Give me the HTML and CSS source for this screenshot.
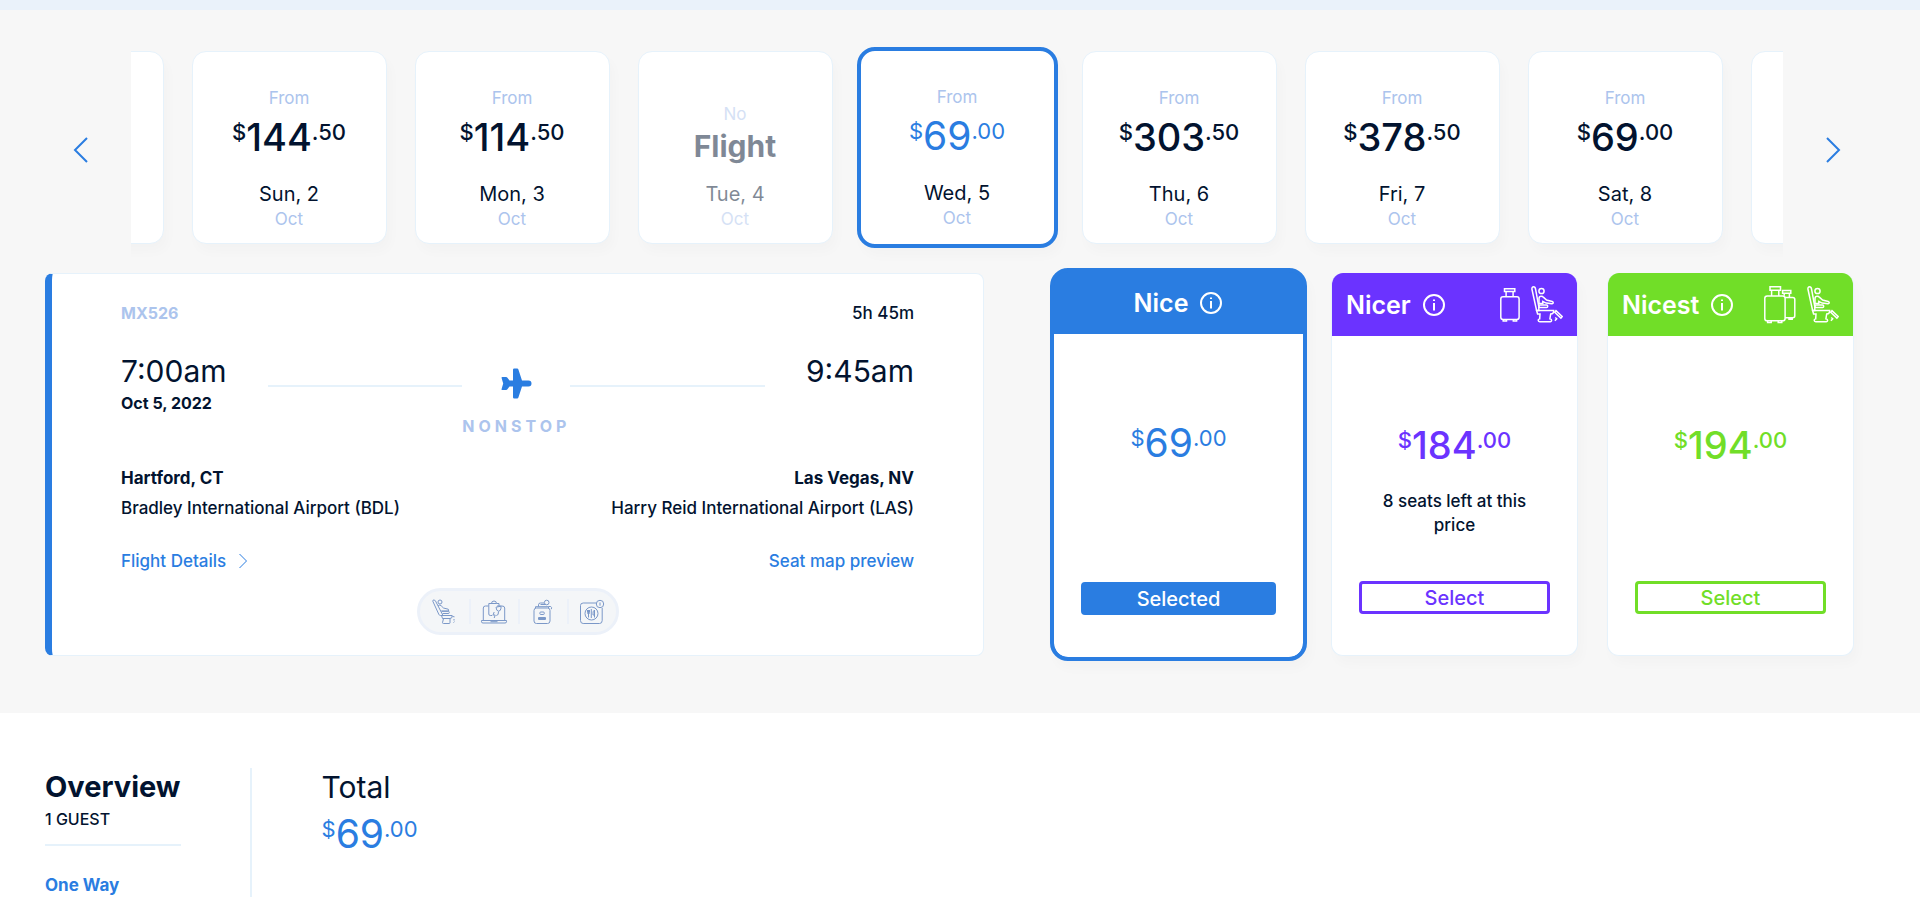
FILE: index.html
```html
<!DOCTYPE html>
<html lang="en">
<head>
<meta charset="utf-8">
<meta name="viewport" content="width=device-width, initial-scale=1">
<title>Select your flight</title>
<link rel="stylesheet" href="styles.css">
</head>
<body>
<svg class="sprite" aria-hidden="true">
  <symbol id="seat" viewBox="0 0 32 37">
    <path d="M1 3.500C.6 1.600 1.600.8 2.600.8S4.300 1.600 4.500 3l3.300 17.500v4H5.600z"/>
    <circle cx="10.500" cy="5" r="2.600"/>
    <path d="M8 17.300v-4.800c0-1.400 1-2.200 2.300-2.200 1 0 1.700.4 2.300 1.100l3 2.600 5.600 1.500c1.700.6 1.200 2.400-.4 2.200l-5.600-.6-3.400-1.600v2.100z"/>
    <path d="M8 18.900h7.600c1.500 0 1.500 2.600 0 2.600H8z"/>
    <path d="M5.600 24.500h17.100c.2 2-.8 3.300-3 3.500l-.8 4.800c2.200.2 2.200 2.900.3 2.900H8.700c-2 0-2-2.600 0-2.900l.3-4.700H6.600z"/>
    <path d="M23.700 26.200l1.300-1.500 6.200 5.800-1.300 1.600z"/>
    <path d="M24.200 31.500l1.500 1.300-1.800 1.900"/>
  </symbol>
  <symbol id="bag" viewBox="0 0 20 34">
    <path d="M4.500.7h10.300v2.900H4.500zM6.100 3.600v5.200M13.100 3.600v5.200"/>
    <rect x=".8" y="8.800" width="18.300" height="22.600" rx="2.200"/>
    <path d="M3.200 31.400v1.500h3.300v-1.500M13.300 31.400v1.500h3.300v-1.500"/>
  </symbol>
  <symbol id="bags" viewBox="0 0 32 38">
    <path d="M6 .8h10.500v3.500H6zM7.600 4.300v5.600M14.800 4.300v5.600"/>
    <rect x=".8" y="9.900" width="20.300" height="24.900" rx="2.400"/>
    <path d="M3.600 34.800v1.700h3.600v-1.700M14.200 34.800v1.700h3.600v-1.700"/>
    <path d="M18.600 4.600h8.200v2.600h-8.200zM20.200 7.200v2.600M25.400 7.200v4.400M21.100 11.600h7.700c1.300 0 2 .7 2 2v16.200c0 1.300-.7 2-2 2h-7.700M25 31.800v1.400h3.200v-1.400"/>
  </symbol>
  <symbol id="info" viewBox="0 0 24 24">
    <circle cx="12" cy="12" r="10"/>
    <path d="M12 10v7.500"/><path d="M12 6.500v1.500"/>
  </symbol>
</svg>

<div class="topbar"></div>
<main>
<section class="search">
  <div class="carousel">
    <button class="arrow" aria-label="Earlier dates"><svg width="16" height="28" viewBox="0 0 16 28"><path d="M14 2L2 14l12 12"/></svg></button>
    <div class="strip">
      <div class="day"></div>
      <button class="day"><span class="note">From</span><span class="price"><small>$</small>144<small>.50</small></span><span class="date">Sun, 2</span><span class="month">Oct</span></button>
      <button class="day"><span class="note">From</span><span class="price"><small>$</small>114<small>.50</small></span><span class="date">Mon, 3</span><span class="month">Oct</span></button>
      <button class="day day-none" disabled><span class="note">No</span><span class="none">Flight</span><span class="date">Tue, 4</span><span class="month">Oct</span></button>
      <button class="day day-selected" aria-pressed="true"><span class="note">From</span><span class="price"><small>$</small>69<small>.00</small></span><span class="date">Wed, 5</span><span class="month">Oct</span></button>
      <button class="day"><span class="note">From</span><span class="price"><small>$</small>303<small>.50</small></span><span class="date">Thu, 6</span><span class="month">Oct</span></button>
      <button class="day"><span class="note">From</span><span class="price"><small>$</small>378<small>.50</small></span><span class="date">Fri, 7</span><span class="month">Oct</span></button>
      <button class="day"><span class="note">From</span><span class="price"><small>$</small>69<small>.00</small></span><span class="date">Sat, 8</span><span class="month">Oct</span></button>
      <div class="day"></div>
    </div>
    <button class="arrow" aria-label="Later dates"><svg width="16" height="28" viewBox="0 0 16 28"><path d="M2 2l12 12L2 26"/></svg></button>
  </div>

  <div class="result">
    <article class="flight">
      <div class="row"><b class="pale">MX526</b><span>5h 45m</span></div>
      <div class="route">
        <div><div class="time">7:00am</div><b class="day-of">Oct 5, 2022</b></div>
        <div class="path">
          <i class="line"></i>
          <div class="stop">
            <svg width="31" height="31" viewBox="0 0 31 31"><path d="M12 1.800Q12 .5 13.200.5h3Q17 .5 17.400 1.600L21 12.500H27.500a3 3 0 0 1 0 6H21L17.400 29.400Q17 30.500 16.200 30.500h-3Q12 30.500 12 29.200V18.500H8.500L6.200 21.600Q5.800 22 5.200 22H1.400Q.3 22 .6 21L2.200 15.500.6 10Q.3 9 1.400 9H5.200Q5.800 9 6.200 9.400L8.500 12.500H12z"/></svg>
            <b class="nonstop">NONSTOP</b>
          </div>
          <i class="line"></i>
        </div>
        <div class="time">9:45am</div>
      </div>
      <div class="row cities"><b>Hartford, CT</b><b>Las Vegas, NV</b></div>
      <div class="row airports"><span>Bradley International Airport (BDL)</span><span>Harry Reid International Airport (LAS)</span></div>
      <div class="row links">
        <a href="#details">Flight Details <svg width="10" height="16" viewBox="0 0 10 16"><path d="M1.500 1l7 7-7 7"/></svg></a>
        <a href="#seats">Seat map preview</a>
      </div>
      <ul class="amenities">
        <li><svg width="24" height="26" viewBox="0 0 24 26"><path d="M.8 2.200Q.6 1 1.800 1q1.200 0 1.700 1L11 16.500H8.500Q7.300 16.500 6.800 15.300z"/><circle cx="8" cy="3" r="2"/><path d="M6.200 6.500q1.800-1 3 .3l2.300 2.200 4.700 1.200q1.300.8 0 1.800H9.200M9.800 12.300h7q1 1.200 0 2.200h-6M9.500 16.500h10.700q.3 3-2.200 3H10.500zM11.500 19.500h6.500v4.200q0 .8-1 .8h-5.500q-1 0-1-.8zM20.500 17.500l2 .3M22 20v1.500M21.500 23.500l1-.8"/></svg></li>
        <li><svg width="28" height="26" viewBox="0 0 28 26"><path d="M8.500 7H5.500Q3.300 7 3.300 9v12.500M17 7h5Q24.700 7 24.700 9v12.500M1.500 21.500h25v1.300q0 1.200-1.500 1.200H3q-1.500 0-1.500-1.200zM10.500 22.700h7"/><path d="M16.500 4.500H8.800V15q0 1.500 1.500 1.500h2M11.500 4.500Q11.500 2 14 2t2.500 2.500h2.500v2.500M16 8.200l5-1v2q-.4 3-2.500 3T16 8.200M18.500 12.500q.3 4-2.200 4M14.200 13l-1.200 3h2.200l-1 3"/></svg></li>
        <li><svg width="22" height="26" viewBox="0 0 22 26"><rect x="2" y="9" width="16" height="15.500" rx="2.500"/><path d="M3.500 9V7.700h13V9M6.500 7.500V5.800Q6.500 4 8.500 4H12M13.500 5.500H8.500M16.500 7.500h2.200q1.500.8.600 2.700"/><circle cx="14.700" cy="3.500" r="2.300"/><rect x="7.800" y="13" width="4.500" height="2.500" rx="1"/><path d="M6.500 18.500h7v2h-7zM6.500 19.500h7"/></svg></li>
        <li><svg width="26" height="26" viewBox="0 0 26 26"><path d="M17.500 4H4.200Q1.500 4 1.500 6.500v15Q1.500 24.500 4.200 24.500h16.300q2.700 0 2.700-3V9"/><circle cx="12.500" cy="14.500" r="6.500"/><circle cx="21" cy="5" r="3.700"/><path d="M8.500 11v2.500q0 1.500 1 1.500V18.500M10.500 11v2.500q0 1.500-1 1.500M9.500 11v4M15.500 18.500V11q-2 1-1.500 5h1.500M12.300 10v9M21 3.500v3.200"/></svg></li>
      </ul>
    </article>

    <div class="fares">
      <article class="fare fare-nice">
        <h2>Nice <svg class="info"><use href="#info"/></svg></h2>
        <div class="fare-body"><span class="price"><small>$</small>69<small>.00</small></span><button>Selected</button></div>
      </article>
      <article class="fare fare-nicer">
        <h2>Nicer <svg class="info"><use href="#info"/></svg><span class="perks"><svg class="bag"><use href="#bag"/></svg><svg class="seat"><use href="#seat"/></svg></span></h2>
        <div class="fare-body"><span class="price"><small>$</small>184<small>.00</small></span><p>8 seats left at this price</p><button>Select</button></div>
      </article>
      <article class="fare fare-nicest">
        <h2>Nicest <svg class="info"><use href="#info"/></svg><span class="perks"><svg class="bags"><use href="#bags"/></svg><svg class="seat"><use href="#seat"/></svg></span></h2>
        <div class="fare-body"><span class="price"><small>$</small>194<small>.00</small></span><button>Select</button></div>
      </article>
    </div>
  </div>
</section>

<section class="overview">
  <div class="summary">
    <div class="guests"><h2>Overview</h2><p>1 GUEST</p></div>
    <a href="#trip"><b>One Way</b></a>
  </div>
  <div class="total"><h3>Total</h3><span class="price"><small>$</small>69<small>.00</small></span></div>
</section>
</main>
</body>
</html>
```
FILE: styles.css
```css
:root {
  --ink: #02132f;
  --blue: #2a7de1;
  --pale: #acc4ed;
  --rule: #e6f2fb;
  --purple: #6b33ff;
  --green: #71de28;
}

* { box-sizing: border-box; }

body {
  margin: 0;
  background: #fff;
  color: var(--ink);
  font: 500 17px/24px Inter, "Liberation Sans", sans-serif;
}

h2, h3, p, ul { margin: 0; padding: 0; }
button { font: inherit; color: inherit; cursor: pointer; }
a { color: var(--blue); text-decoration: none; }
svg { fill: none; stroke: currentColor; flex: none; }
.sprite { display: none; }

.topbar { height: 10px; background: #eaf2fa; }
.search { background: #f7f7f7; padding: 21px 0 57px; }

/* Prices */
.price {
  display: flex;
  align-items: flex-start;
  font-size: 38px;
  line-height: 44px;
}
.price small { font-size: 22px; line-height: 34px; }

/* Date carousel */
.carousel {
  display: grid;
  grid-template-columns: 100px minmax(0, 1fr) 100px;
  align-items: center;
  padding: 0 37px 0 31px;
  margin-bottom: 5px;
}
.arrow {
  display: flex;
  justify-content: center;
  padding: 20px 0;
  border: 0;
  background: none;
  color: var(--blue);
  stroke-width: 2;
}
.strip {
  display: flex;
  justify-content: center;
  gap: 28px;
  overflow: hidden;
  padding: 20px 0 24px;
}
.day {
  flex: 0 0 195px;
  min-height: 193px;
  display: flex;
  flex-direction: column;
  align-items: center;
  justify-content: flex-end;
  padding: 0 0 14px;
  border: 1px solid var(--rule);
  border-radius: 14px;
  background: #fff;
  box-shadow: 4px 8px 12px rgba(0, 0, 0, 0.02);
}
.note, .month { font-size: 17px; line-height: 20px; font-weight: 400; color: var(--pale); }
.day .price { margin: 7px 0 23px; }
.date { font-size: 20px; margin-bottom: 3px; font-weight: 400; }
.none { font-size: 30px; line-height: 32px; font-weight: 700; margin: 6px 0 20px; }
.day-none > * { opacity: 0.5; }
.day-none { color: var(--ink); }
.day-selected {
  flex-basis: 201px;
  margin: -4px;
  padding-bottom: 16px;
  border: 4px solid var(--blue);
  border-radius: 18px;
}
.day-selected .price { color: var(--blue); font-size: 39px; font-weight: 400; }

/* Flight result */
.result {
  display: grid;
  grid-template-columns: minmax(0, 939fr) minmax(0, 799fr);
  gap: 71px;
  padding: 0 66px 0 45px;
}
.flight {
  display: flex;
  flex-direction: column;
  padding: 27px 69px 20px;
  border: 1px solid var(--rule);
  border-left: 7px solid var(--blue);
  border-radius: 8px;
  background: #fff;
}
.row { display: flex; justify-content: space-between; }
.pale, .nonstop { color: var(--pale); }
.pale, .nonstop, .day-of { font-size: 16px; }
.route { display: flex; gap: 41px; margin-top: 28px; }
.time { font-size: 30px; line-height: 36px; font-weight: 400; margin-bottom: 2px; }
.path {
  flex: 1;
  display: grid;
  grid-template-columns: 1fr auto 1fr;
}
.line { height: 2px; margin-top: 32px; background: var(--rule); }
.stop { display: flex; flex-direction: column; align-items: center; gap: 15px; padding-top: 15px; }
.stop svg { fill: var(--blue); stroke: none; }
.nonstop { letter-spacing: 4px; }
.cities { margin-top: 28px; }
.airports { margin-top: 6px; }
.links { margin-top: 29px; }
.links a { display: flex; align-items: center; gap: 12px; }
.amenities {
  align-self: center;
  display: flex;
  margin-top: 15px;
  padding: 8px 0;
  border: 3px solid #ecf1f9;
  border-radius: 24px;
  background: #f4f6f8;
  color: #7b98c8;
  list-style: none;
}
.amenities li { width: 49px; height: 25px; display: grid; place-items: center; }
.amenities li + li { border-left: 2px solid #ecf1f9; }

/* Fare cards */
.fares { display: grid; grid-template-columns: repeat(3, minmax(0, 1fr)); gap: 29px; }
.fare {
  --tone: var(--blue);
  display: flex;
  flex-direction: column;
  border: 1px solid var(--rule);
  border-top: 0;
  border-radius: 12px;
  background: #fff;
  box-shadow: 4px 8px 12px rgba(0, 0, 0, 0.02);
  overflow: hidden;
}
.fare-nicer { --tone: var(--purple); }
.fare-nicest { --tone: var(--green); }
.fare h2 {
  display: flex;
  align-items: center;
  gap: 11px;
  height: 63px;
  padding: 0 14px;
  background: var(--tone);
  color: #fff;
  font-size: 25px;
  font-weight: 600;
}
.info { width: 24px; height: 24px; stroke-width: 2; }
.perks { display: flex; align-items: center; gap: 11px; margin-left: auto; stroke-width: 1.5; }
.bag { width: 20px; height: 34px; }
.bags { width: 32px; height: 38px; }
.seat { width: 32px; height: 37px; }
.fare-body {
  flex: 1;
  display: flex;
  flex-direction: column;
  align-items: center;
  padding: 87px 27px 41px;
}
.fare .price { color: var(--tone); }
.fare p { margin-top: 22px; padding: 0 20px; text-align: center; }
.fare button {
  width: 100%;
  height: 33px;
  margin-top: auto;
  padding: 0;
  border: 3px solid var(--tone);
  border-radius: 4px;
  background: #fff;
  color: var(--tone);
  font-size: 20px;
}
.fare-nice { margin: -5px; border: 4px solid var(--tone); border-radius: 18px; background: var(--tone); }
.fare-nice h2 { height: 62px; justify-content: center; }
.fare-nice .price { font-size: 39px; font-weight: 400; }
.fare-nice .fare-body { padding-bottom: 42px; border-radius: 0 0 14px 14px; background: #fff; }
.fare-nice button { background: var(--tone); color: #fff; }

/* Trip overview */
.overview { display: flex; padding: 55px 45px 15px; }
.summary { padding-right: 69px; border-right: 2px solid var(--rule); }
.guests { padding: 1px 0 13px; margin-bottom: 27px; border-bottom: 2px solid var(--rule); }
.guests p { font-size: 16px; }
.overview h2, .overview h3 { font-size: 29px; line-height: 36px; font-weight: 700; margin-bottom: 2px; }
.total { padding: 1px 0 0 70px; }
.overview h3 { font-size: 30px; font-weight: 400; margin-bottom: 7px; }
.total .price { color: var(--blue); font-size: 39px; font-weight: 400; }
```
